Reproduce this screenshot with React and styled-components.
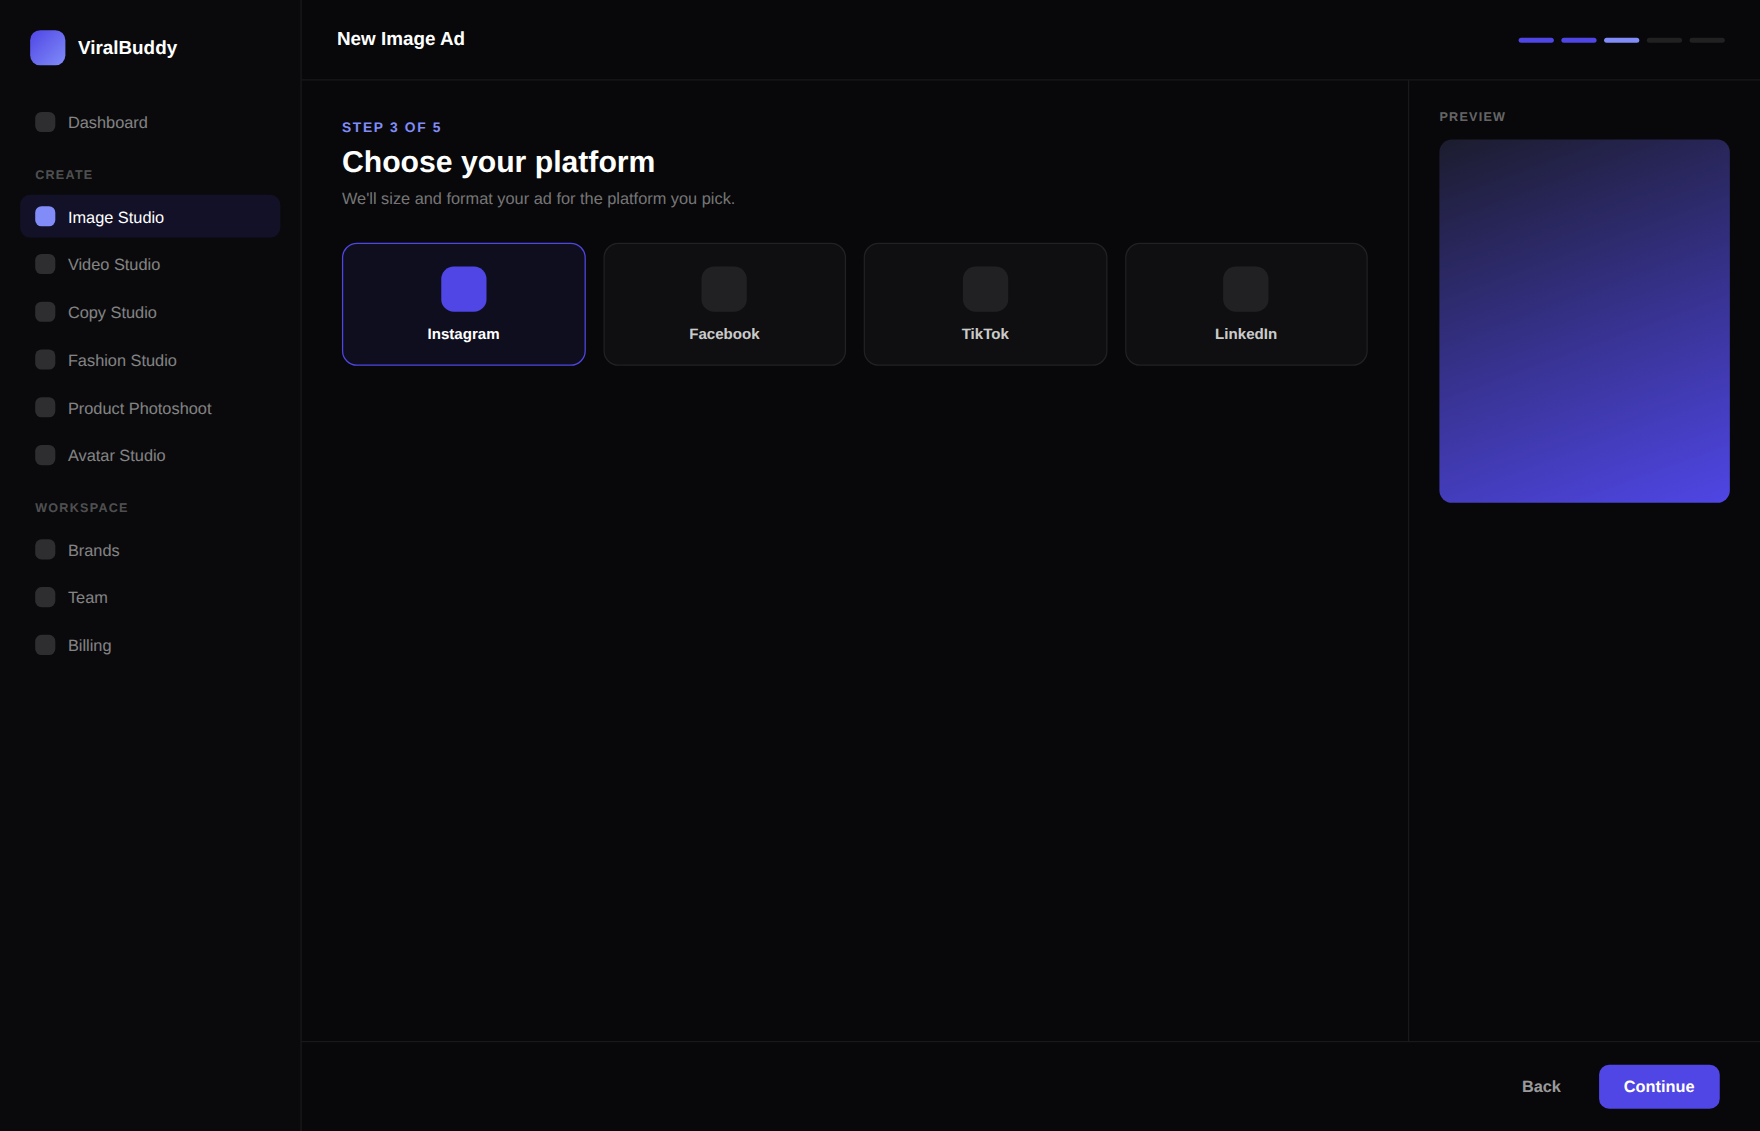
import React from 'react';
import styled, {createGlobalStyle} from "styled-components";

const createLinks = ["Image Studio", "Video Studio", "Copy Studio", "Fashion Studio", "Product Photoshoot", "Avatar Studio"];
const workspaceLinks = ["Brands", "Team", "Billing"];
const platforms = ["Instagram", "Facebook", "TikTok", "LinkedIn"];
const steps = ["done", "done", "current", "todo", "todo"];

const stepColors = {
    done: '#4f46e5',
    current: '#818cf8',
    todo: 'rgba(255,255,255,0.1)'
};

const NavLink = ({label, active}) => (
    <NavItem $active={active}>
        <NavIcon $active={active} />
        <NavLabel>{label}</NavLabel>
    </NavItem>
);

const Sidebar = () => {
    return (
        <Side>
            <Brand>
                <Logo />
                ViralBuddy
            </Brand>
            <Nav>
                <NavLink label="Dashboard" />
                <NavHeading>CREATE</NavHeading>
                {createLinks.map(label => (
                    <NavLink key={label} label={label} active={label === "Image Studio"} />
                ))}
                <NavHeading>WORKSPACE</NavHeading>
                {workspaceLinks.map(label => (
                    <NavLink key={label} label={label} />
                ))}
            </Nav>
        </Side>
    );
};

const App = () => {
    return (
        <Page>
            <GlobalStyle />
            <Shell>
                <Sidebar />
                <Main>
                    <Header>
                        <HeaderTitle>New Image Ad</HeaderTitle>
                        <Progress>
                            {steps.map((state, i) => <Step key={i} $state={state} />)}
                        </Progress>
                    </Header>
                    <Body>
                        <Content>
                            <Eyebrow>STEP 3 OF 5</Eyebrow>
                            <Title>Choose your platform</Title>
                            <Subtitle>We'll size and format your ad for the platform you pick.</Subtitle>
                            <Grid>
                                {platforms.map((name, i) => (
                                    <Card key={name} $selected={i === 0}>
                                        <CardIcon $selected={i === 0} />
                                        {name}
                                    </Card>
                                ))}
                            </Grid>
                        </Content>
                        <Preview>
                            <PreviewLabel>PREVIEW</PreviewLabel>
                            <PreviewImage />
                        </Preview>
                    </Body>
                    <Footer>
                        <Button>Back</Button>
                        <Button $primary>Continue</Button>
                    </Footer>
                </Main>
            </Shell>
        </Page>
    );
};


const GlobalStyle = createGlobalStyle`
    * {
        box-sizing:border-box;
    }

    body {
        margin:0;
        background:#08080a;
        font-family:"Liberation Sans", Arial, sans-serif;
        text-rendering:geometricPrecision;
    }
`;

const Page = styled.div`
    width:1760px;
    height:1131px;
    overflow:hidden;
`;

const Shell = styled.div`
    display:flex;
    width:1400px;
    height:900px;
    transform:scale(1.25714);
    transform-origin:0 0;
    color:#fff;
`;

const Side = styled.aside`
    width:240px;
    flex-shrink:0;
    padding:24px 16px;
    background:#0a0a0c;
    border-right:1px solid rgba(255,255,255,0.07);
`;

const Brand = styled.div`
    display:flex;
    align-items:center;
    gap:10px;
    padding:0 8px;
    margin-bottom:28px;
    font-size:15px;
    font-weight:700;
`;

const Logo = styled.div`
    width:28px;
    height:28px;
    border-radius:8px;
    background:linear-gradient(135deg, #4f46e5, #818cf8);
`;

const Nav = styled.nav`
    display:flex;
    flex-direction:column;
    gap:4px;
`;

const NavItem = styled.a`
    display:flex;
    align-items:center;
    gap:10px;
    height:34px;
    padding:0 12px;
    border-radius:8px;
    font-size:13px;
    color:${({$active}) => $active ? '#fff' : 'rgba(255,255,255,0.5)'};
    background:${({$active}) => $active ? 'rgba(79,70,229,0.13)' : 'transparent'};
`;

const NavIcon = styled.span`
    width:16px;
    height:16px;
    border-radius:5px;
    background:${({$active}) => $active ? '#818cf8' : 'rgba(255,255,255,0.15)'};
`;

const NavLabel = styled.span`
    padding-top:1px;
    line-height:15px;
`;

const NavHeading = styled.div`
    padding:16px 12px 6px;
    font-size:10px;
    line-height:11px;
    font-weight:700;
    letter-spacing:1px;
    color:rgba(255,255,255,0.3);
`;

const Main = styled.main`
    flex:1;
    display:flex;
    flex-direction:column;
`;

const Header = styled.header`
    display:flex;
    align-items:center;
    justify-content:space-between;
    height:64px;
    padding:0 28px;
    border-bottom:1px solid rgba(255,255,255,0.07);
`;

const HeaderTitle = styled.div`
    padding-bottom:1px;
    font-size:15px;
    line-height:17px;
    font-weight:700;
`;

const Progress = styled.div`
    display:flex;
    gap:6px;
    padding-top:1px;
`;

const Step = styled.span`
    width:28px;
    height:4px;
    border-radius:2px;
    background:${({$state}) => stepColors[$state]};
`;

const Body = styled.div`
    flex:1;
    display:flex;
`;

const Content = styled.section`
    flex:1;
    padding:32px;
`;

const Eyebrow = styled.div`
    margin-bottom:7px;
    font-size:11px;
    line-height:13px;
    font-weight:700;
    letter-spacing:0.12em;
    color:#818cf8;
`;

const Title = styled.h1`
    margin:0 0 7px;
    font-size:24px;
    line-height:27px;
    font-weight:700;
`;

const Subtitle = styled.p`
    margin:0 0 28px;
    font-size:13px;
    line-height:15px;
    color:rgba(255,255,255,0.45);
`;

const Grid = styled.div`
    display:grid;
    grid-template-columns:repeat(4, 1fr);
    gap:14px;
`;

const Card = styled.div`
    display:flex;
    flex-direction:column;
    align-items:center;
    gap:10.5px;
    padding:18px 18px 17.5px;
    border-radius:12px;
    border:1px solid ${({$selected}) => $selected ? '#4f46e5' : 'rgba(255,255,255,0.08)'};
    background:${({$selected}) => $selected ? 'rgba(79,70,229,0.1)' : 'rgba(255,255,255,0.03)'};
    font-size:12px;
    line-height:14px;
    font-weight:700;
    color:${({$selected}) => $selected ? '#fff' : 'rgba(255,255,255,0.8)'};
`;

const CardIcon = styled.div`
    width:36px;
    height:36px;
    border-radius:10px;
    background:${({$selected}) => $selected ? '#4f46e5' : 'rgba(255,255,255,0.08)'};
`;

const Preview = styled.aside`
    width:280px;
    padding:24px;
    border-left:1px solid rgba(255,255,255,0.07);
`;

const PreviewLabel = styled.div`
    margin-bottom:12px;
    font-size:10px;
    line-height:11px;
    font-weight:700;
    letter-spacing:1px;
    color:rgba(255,255,255,0.4);
`;

const PreviewImage = styled.div`
    aspect-ratio:4 / 5;
    border-radius:10px;
    background:linear-gradient(160deg, #1c1c2e, #4f46e5);
`;

const Footer = styled.footer`
    display:flex;
    justify-content:flex-end;
    gap:10px;
    padding:18px 32px;
    border-top:1px solid rgba(255,255,255,0.07);
`;

const Button = styled.button`
    padding:10px 20px;
    border:none;
    border-radius:8px;
    font-family:inherit;
    font-size:13px;
    line-height:15px;
    font-weight:700;
    text-rendering:inherit;
    color:${({$primary}) => $primary ? '#fff' : 'rgba(255,255,255,0.6)'};
    background:${({$primary}) => $primary ? '#4f46e5' : 'transparent'};
`;

export default App;
